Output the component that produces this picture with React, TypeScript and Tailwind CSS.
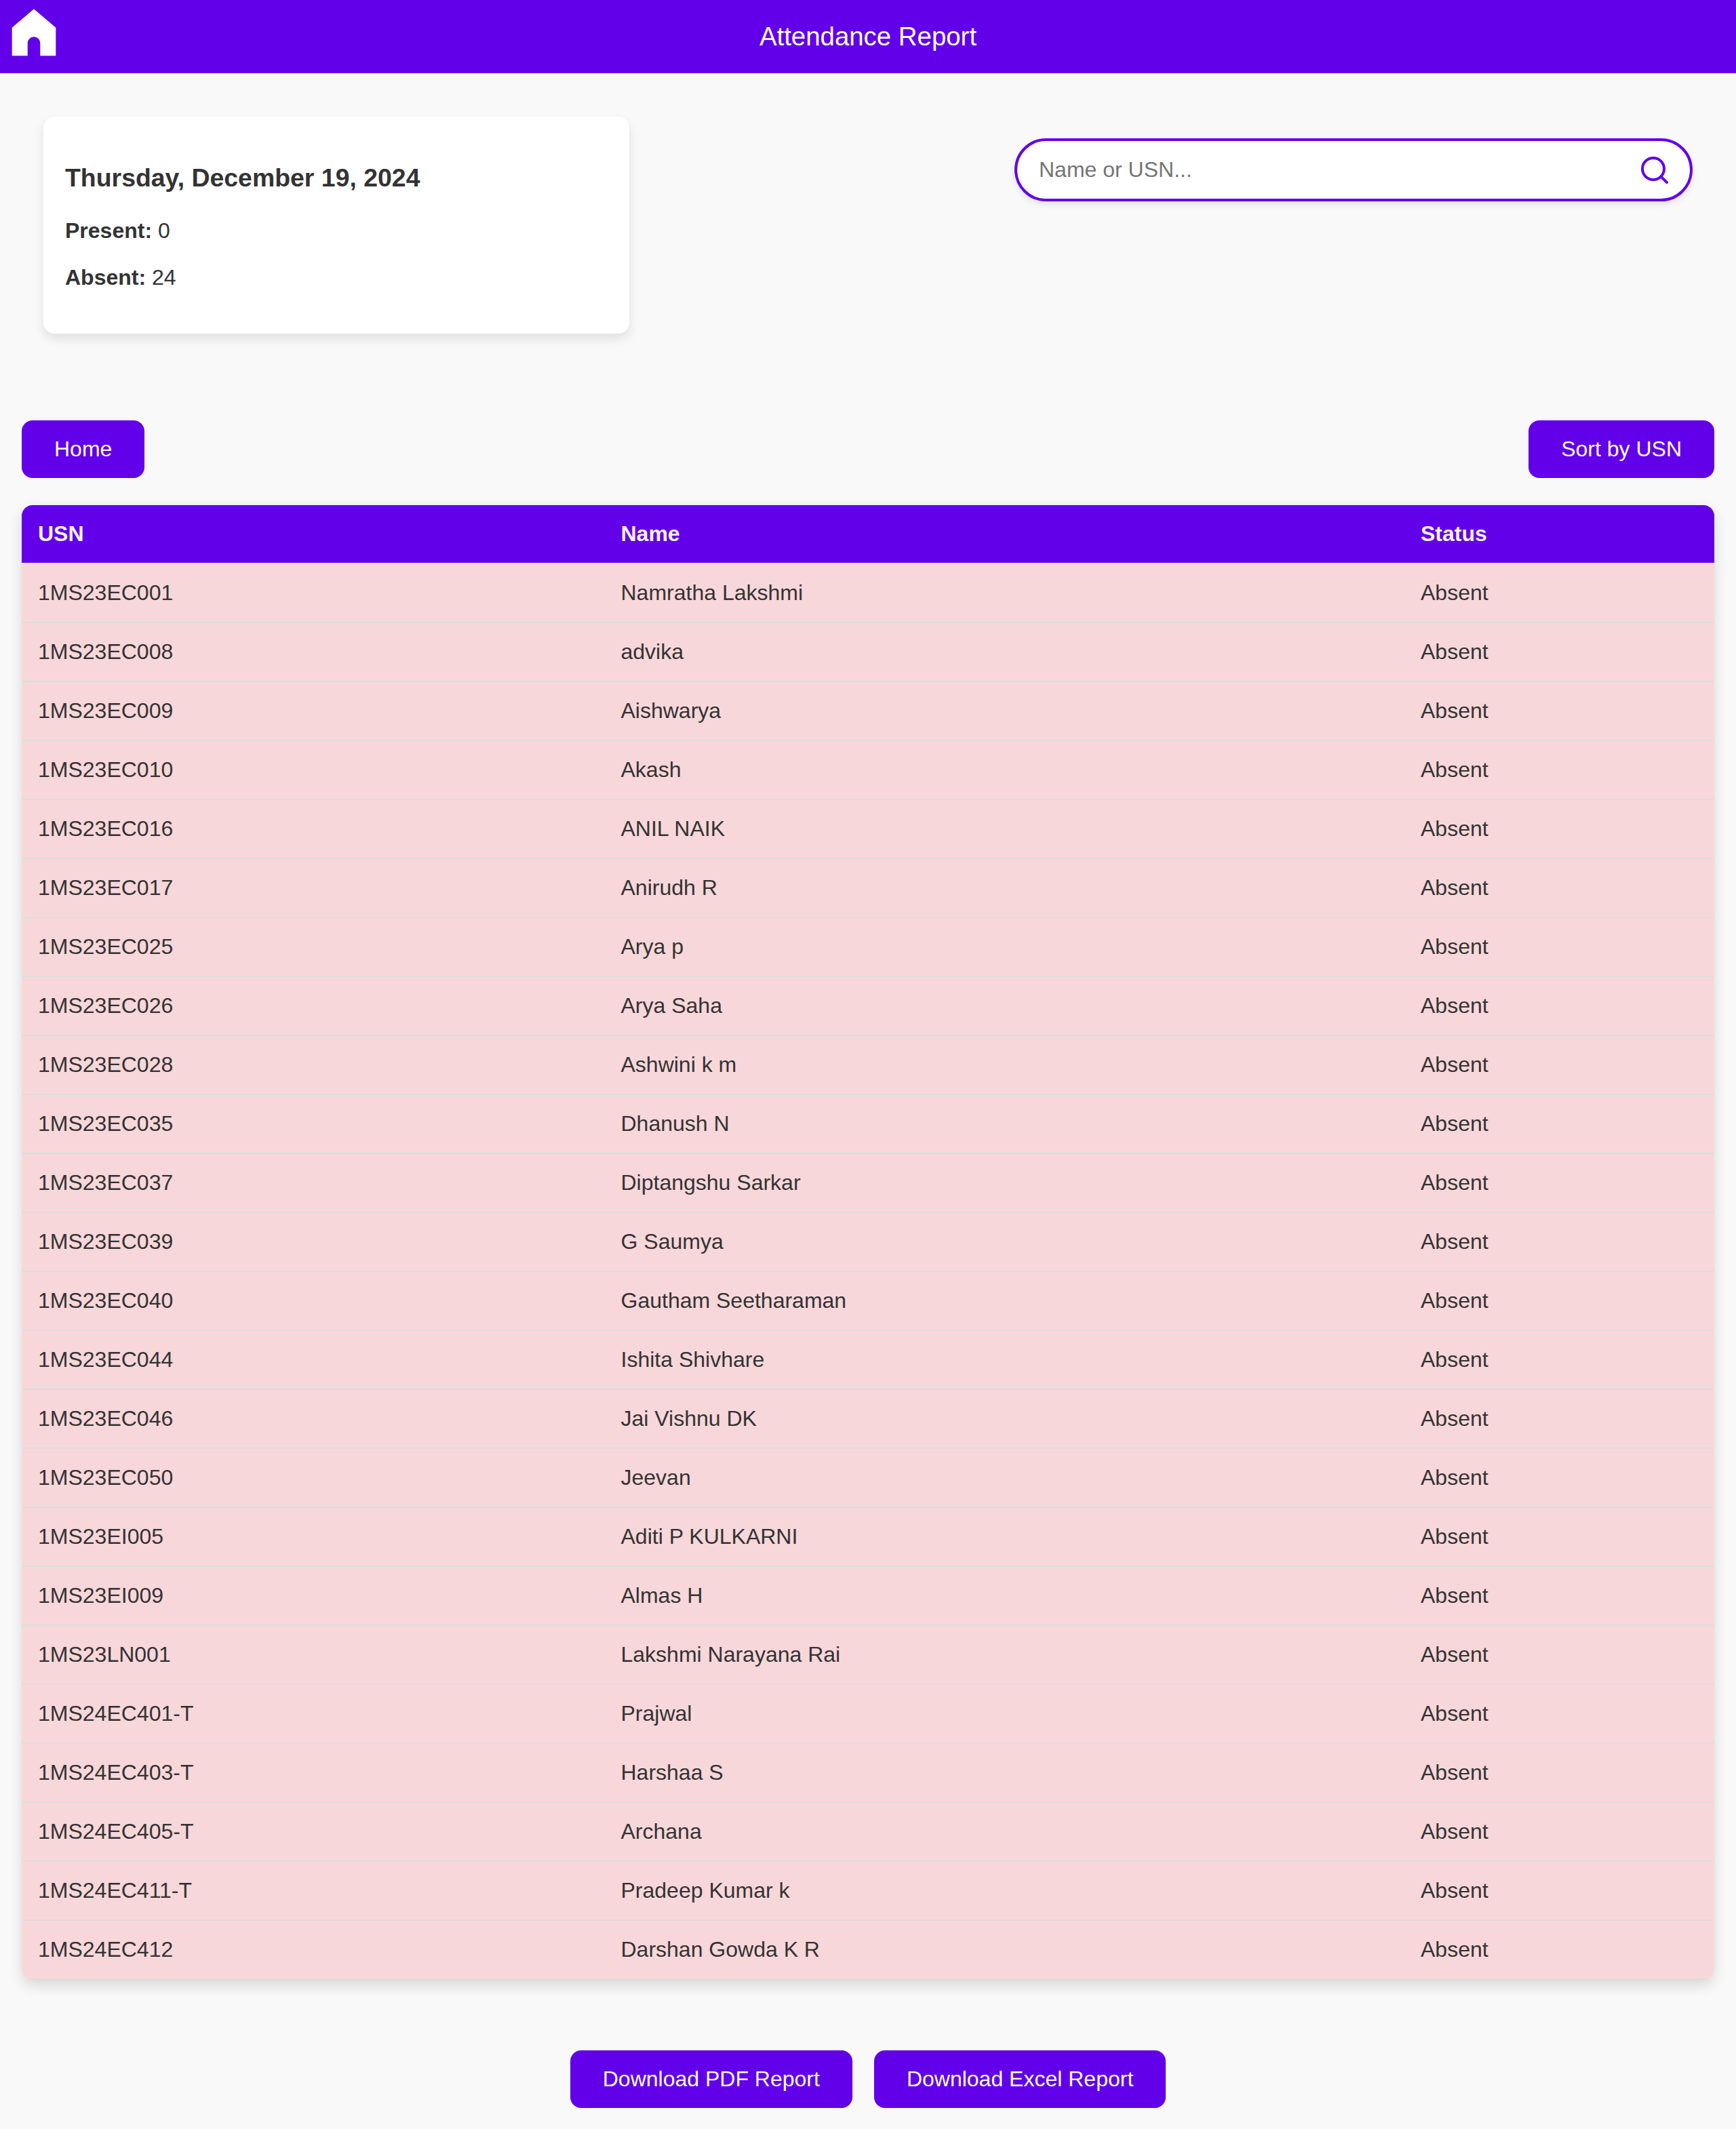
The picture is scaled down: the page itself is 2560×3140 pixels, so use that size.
import React from "react";

const students: [string, string][] = [
  ["1MS23EC001", "Namratha Lakshmi"],
  ["1MS23EC008", "advika"],
  ["1MS23EC009", "Aishwarya"],
  ["1MS23EC010", "Akash"],
  ["1MS23EC016", "ANIL NAIK"],
  ["1MS23EC017", "Anirudh R"],
  ["1MS23EC025", "Arya p"],
  ["1MS23EC026", "Arya Saha"],
  ["1MS23EC028", "Ashwini k m"],
  ["1MS23EC035", "Dhanush N"],
  ["1MS23EC037", "Diptangshu Sarkar"],
  ["1MS23EC039", "G Saumya"],
  ["1MS23EC040", "Gautham Seetharaman"],
  ["1MS23EC044", "Ishita Shivhare"],
  ["1MS23EC046", "Jai Vishnu DK"],
  ["1MS23EC050", "Jeevan"],
  ["1MS23EI005", "Aditi P KULKARNI"],
  ["1MS23EI009", "Almas H"],
  ["1MS23LN001", "Lakshmi Narayana Rai"],
  ["1MS24EC401-T", "Prajwal"],
  ["1MS24EC403-T", "Harshaa S"],
  ["1MS24EC405-T", "Archana"],
  ["1MS24EC411-T", "Pradeep Kumar k"],
  ["1MS24EC412", "Darshan Gowda K R"],
];

function Button({ children }: { children: React.ReactNode }) {
  return (
    <button className="rounded-2xl bg-[#6200ea] px-12 py-6 leading-[37px] text-white">{children}</button>
  );
}

const columns = "grid grid-cols-[859.5px_1179.5px_1fr] border-b-2 border-[#dddddd]";
const cell = "px-6 py-6 leading-[37px]";

export default function App() {
  return (
    <div className="min-h-[3140px] bg-[#f9f9f9] font-['Liberation_Sans',Arial,sans-serif] text-[32px] text-[#333333]">
      <header className="relative flex h-[108px] items-center justify-center bg-[#6200ea] text-[38.4px] leading-[44px] text-white">
        <svg className="absolute top-0 left-0 size-[100px]" viewBox="0 0 100 100" fill="white">
          <path d="M50 13.2 82.3 40.7V82.3H59.3V63.5a9.3 9.3 0 0 0-18.6 0V82.3H17.7V40.7Z" />
        </svg>
        <h1>Attendance Report</h1>
      </header>

      <section className="flex items-start justify-between p-16">
        <div className="h-80 w-[864px] rounded-2xl bg-white p-8 shadow-[0_8px_16px_rgba(0,0,0,0.1)]">
          <h3 className="mt-[37px] mb-[38px] text-[37.44px] leading-[43px] font-bold">Thursday, December 19, 2024</h3>
          <p className="mb-8 leading-[37px]">
            <strong>Present:</strong> 0
          </p>
          <p className="leading-[37px]">
            <strong>Absent:</strong> 24
          </p>
        </div>
        <div className="mt-8 flex h-[93px] w-[1000px] items-start justify-between rounded-full border-4 border-[#6200ea] bg-white pr-7 pl-8 shadow-[0_4px_10px_rgba(0,0,0,0.1)]">
          <input
            type="text"
            placeholder="Name or USN..."
            className="mt-6 h-[37px] w-[800px] bg-transparent leading-[37px] outline-none placeholder:text-[#757575]"
          />
          <svg
            className="mt-[19px] size-12"
            viewBox="0 0 24 24"
            fill="none"
            stroke="#6200ea"
            strokeWidth="2"
            strokeLinecap="round"
            strokeLinejoin="round"
          >
            <circle cx="11" cy="11" r="8" />
            <path d="M21 21l-4.35-4.35" />
          </svg>
        </div>
      </section>

      <main className="px-8 pt-16">
        <div className="mb-10 flex justify-between">
          <Button>Home</Button>
          <Button>Sort by USN</Button>
        </div>

        <div className="overflow-hidden rounded-2xl shadow-[0_8px_20px_rgba(0,0,0,0.14)]">
          <div className={`${columns} bg-[#6200ea] font-bold text-[#f4f4f4]`}>
            <div className={cell}>USN</div>
            <div className={cell}>Name</div>
            <div className={cell}>Status</div>
          </div>
          {students.map(([usn, name]) => (
            <div key={usn} className={`${columns} bg-[#f8d7da]`}>
              <div className={cell}>{usn}</div>
              <div className={cell}>{name}</div>
              <div className={cell}>Absent</div>
            </div>
          ))}
        </div>

        <div className="mt-[104px] flex justify-center gap-8">
          <Button>Download PDF Report</Button>
          <Button>Download Excel Report</Button>
        </div>
      </main>
    </div>
  );
}
